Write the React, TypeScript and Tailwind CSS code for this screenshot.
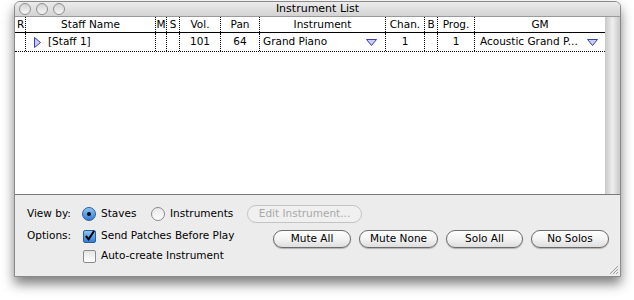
import React from "react";

const font = { fontFamily: '"DejaVu Sans", "Liberation Sans", sans-serif' };

type Col = { key: string; label: string; w: string; align: string };

const cols: Col[] = [
  { key: "r", label: "R", w: "w-[11px]", align: "justify-start pl-[2px]" },
  { key: "name", label: "Staff Name", w: "w-[130px]", align: "justify-center" },
  { key: "m", label: "M", w: "w-[11px]", align: "justify-center" },
  { key: "s", label: "S", w: "w-[13px]", align: "justify-center" },
  { key: "vol", label: "Vol.", w: "w-[41px]", align: "justify-center" },
  { key: "pan", label: "Pan", w: "w-[39px]", align: "justify-center" },
  { key: "inst", label: "Instrument", w: "w-[126px]", align: "justify-center" },
  { key: "chan", label: "Chan.", w: "w-[39px]", align: "justify-center" },
  { key: "b", label: "B", w: "w-[13px]", align: "justify-center" },
  { key: "prog", label: "Prog.", w: "w-[37px]", align: "justify-center" },
  { key: "gm", label: "GM", w: "w-[130px]", align: "justify-center" },
];

function DownTri() {
  return (
    <svg width="11" height="7" viewBox="0 0 11 7">
      <path d="M0.5 0.5 H10.5 L5.5 6.5 Z" fill="#c9cdf5" stroke="#3b3fa8" strokeWidth="1" />
    </svg>
  );
}

function Pill({ label, disabled }: { label: string; disabled?: boolean }) {
  return (
    <div
      className={`flex h-[18px] items-center justify-center rounded-full border text-[10.5px] ${
        disabled
          ? "border-[#c4c4c4] bg-[#f0f0f0] text-[#a8a8a8]"
          : "border-[#6b6b6b] bg-gradient-to-b from-white via-[#f3f3f3] to-[#dedede] text-black shadow-[0_1px_1px_rgba(0,0,0,0.25)]"
      }`}
    >
      {label}
    </div>
  );
}

function Light() {
  return (
    <div className="h-[12px] w-[12px] rounded-full border border-[#8e8e8e] bg-gradient-to-b from-[#d6d6d6] to-[#f4f4f4]" />
  );
}

export default function App() {
  return (
    <div className="h-[300px] w-[634px] overflow-hidden bg-white" style={font}>
      <div className="ml-[14px] mt-[1px] flex h-[276px] w-[607px] flex-col overflow-hidden rounded-t-[6px] border border-[#8a8a8a] bg-[#ececec] shadow-[0_7px_12px_rgba(0,0,0,0.5)]">
        {/* title bar */}
        <div className="relative flex h-[15px] shrink-0 items-center justify-center border-b border-[#9a9a9a] bg-gradient-to-b from-[#ececec] to-[#d3d3d3]">
          <div className="absolute left-[4px] top-[1px] flex gap-[5px]">
            <Light />
            <Light />
            <Light />
          </div>
          <span className="text-[11px] text-black">Instrument List</span>
        </div>

        {/* list area */}
        <div className="flex h-[178px] shrink-0 border-b border-[#7a7a7a]">
          <div className="w-[590px] bg-white text-[10.5px] text-black">
            <div className="flex h-[16px] border-b border-black">
              {cols.map((c, i) => (
                <div
                  key={c.key}
                  className={`${c.w} flex items-center ${c.align} ${
                    i < cols.length - 1 ? "border-r border-dotted border-black" : ""
                  }`}
                >
                  {c.label}
                </div>
              ))}
            </div>
            <div className="flex h-[19px] border-b border-dotted border-black">
              <div className="w-[11px] border-r border-dotted border-black" />
              <div className="flex w-[130px] items-center gap-[7px] border-r border-dotted border-black pl-[8px]">
                <svg width="7" height="11" viewBox="0 0 7 11">
                  <path d="M0.5 0.5 L6.5 5.5 L0.5 10.5 Z" fill="#c9cdf5" stroke="#3b3fa8" strokeWidth="1" />
                </svg>
                <span>[Staff 1]</span>
              </div>
              <div className="w-[11px] border-r border-dotted border-black" />
              <div className="w-[13px] border-r border-dotted border-black" />
              <div className="flex w-[41px] items-center justify-center border-r border-dotted border-black">101</div>
              <div className="flex w-[39px] items-center justify-center border-r border-dotted border-black">64</div>
              <div className="flex w-[126px] items-center justify-between border-r border-dotted border-black pl-[3px] pr-[8px]">
                <span>Grand Piano</span>
                <DownTri />
              </div>
              <div className="flex w-[39px] items-center justify-center border-r border-dotted border-black">1</div>
              <div className="w-[13px] border-r border-dotted border-black" />
              <div className="flex w-[37px] items-center justify-center border-r border-dotted border-black">1</div>
              <div className="flex w-[130px] items-center justify-between pl-[5px] pr-[7px]">
                <span>Acoustic Grand P...</span>
                <DownTri />
              </div>
            </div>
          </div>
          <div className="w-[15px] bg-gradient-to-r from-[#c8c8c8] via-[#eeeeee] to-[#c8c8c8]" />
        </div>

        {/* bottom panel */}
        <div className="relative flex-1 pl-[12px] pt-[10px] text-[10.5px] text-black">
          <div className="flex h-[18px] items-center">
            <span className="w-[55px]">View by:</span>
            <div className="flex h-[14px] w-[14px] items-center justify-center rounded-full border border-[#2c5c9a] bg-gradient-to-b from-[#8ec4f2] to-[#2f7fd6]">
              <div className="h-[4px] w-[4px] rounded-full bg-black" />
            </div>
            <span className="ml-[5px] w-[50px]">Staves</span>
            <div className="h-[14px] w-[14px] rounded-full border border-[#8a8a8a] bg-gradient-to-b from-[#e8e8e8] to-white" />
            <span className="ml-[5px] w-[77px]">Instruments</span>
            <div className="w-[115px]">
              <Pill label="Edit Instrument..." disabled />
            </div>
          </div>
          <div className="mt-[4px] flex items-start">
            <div className="flex w-[246px] flex-col">
              <div className="flex h-[18px] items-center">
                <span className="w-[56px]">Options:</span>
                <div className="flex h-[13px] w-[13px] items-center justify-center rounded-[2px] border border-[#2c5c9a] bg-gradient-to-b from-[#8ec4f2] to-[#2f7fd6]">
                  <svg width="12" height="12" viewBox="0 0 12 12">
                    <path d="M2 6 L5 9.5 L11 0.5" fill="none" stroke="black" strokeWidth="2.2" />
                  </svg>
                </div>
                <span className="ml-[5px]">Send Patches Before Play</span>
              </div>
              <div className="mt-[2px] flex h-[18px] items-center pl-[56px]">
                <div className="h-[13px] w-[13px] rounded-[2px] border border-[#8a8a8a] bg-gradient-to-b from-[#e6e6e6] to-white" />
                <span className="ml-[5px]">Auto-create Instrument</span>
              </div>
            </div>
            <div className="mt-[3px] flex gap-[8px]">
              <div className="w-[78px]"><Pill label="Mute All" /></div>
              <div className="w-[79px]"><Pill label="Mute None" /></div>
              <div className="w-[77px]"><Pill label="Solo All" /></div>
              <div className="w-[78px]"><Pill label="No Solos" /></div>
            </div>
          </div>
          <svg className="absolute bottom-[1px] right-[1px]" width="11" height="11" viewBox="0 0 11 11">
            <path d="M10 2 L2 10 M10 5 L5 10 M10 8 L8 10" stroke="#9a9a9a" strokeWidth="1" />
          </svg>
        </div>
      </div>
    </div>
  );
}
